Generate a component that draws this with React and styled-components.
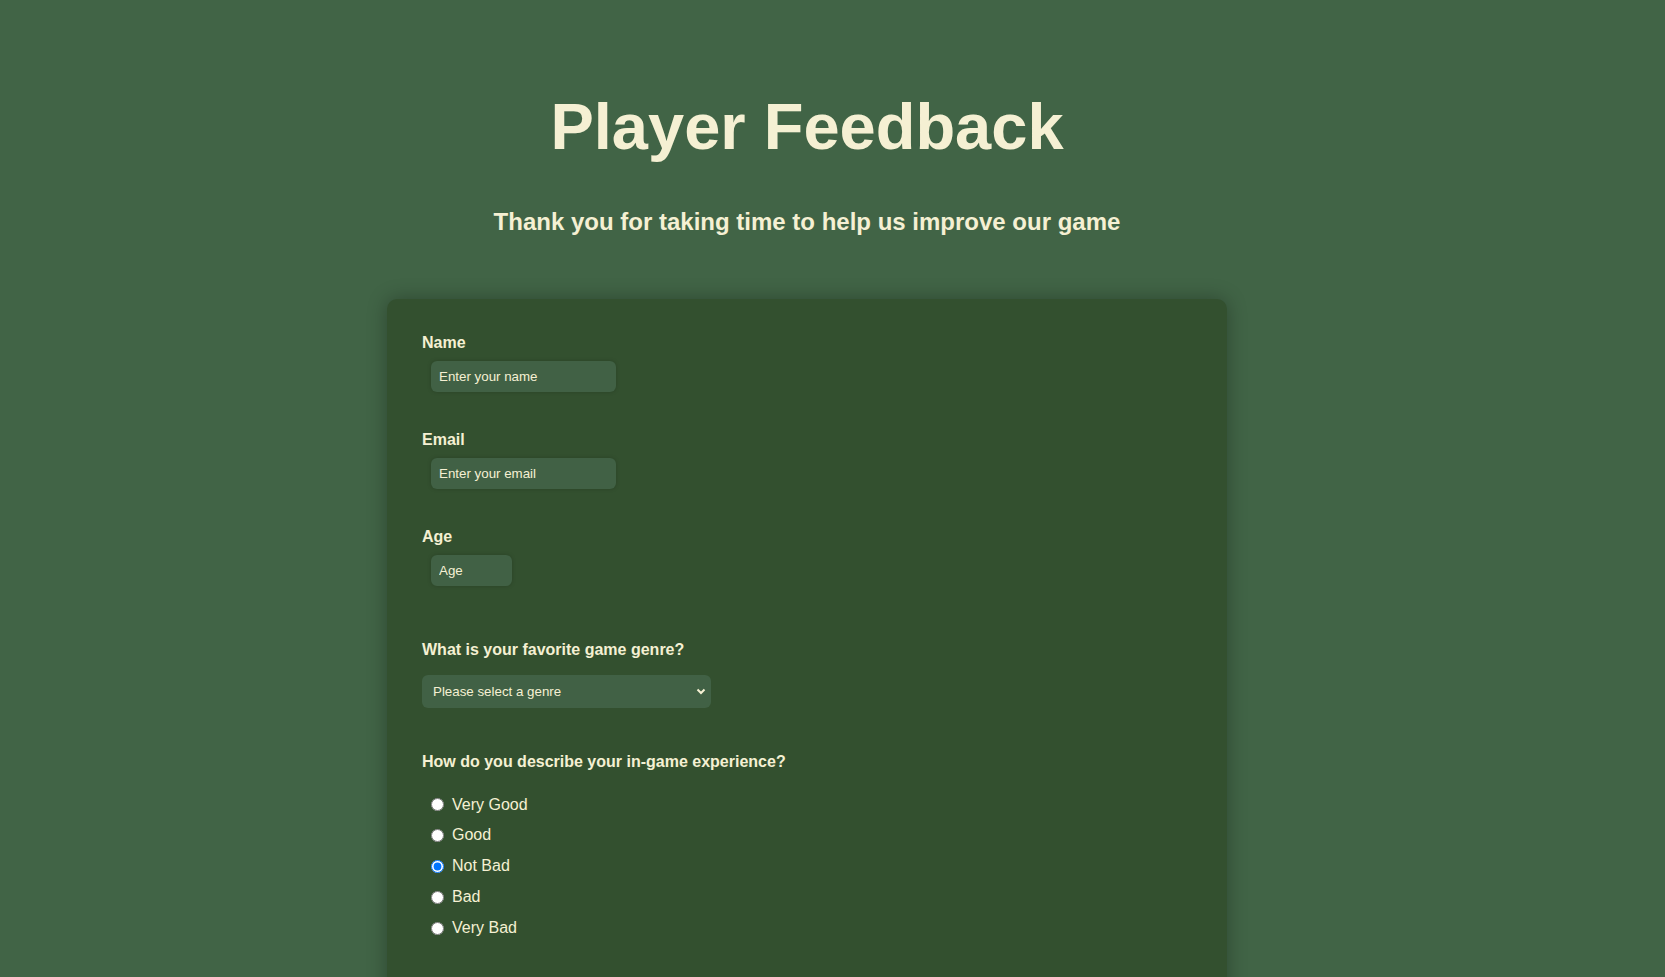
import React, { useState } from 'react';
import styled, { createGlobalStyle } from 'styled-components';

const cream = '#f5f0d3';

const GlobalStyle = createGlobalStyle`
  html, body {
    margin: 0;
    background-color: #416446;
    font-family: "Liberation Sans", Arial, sans-serif;
    color: ${cream};
  }
`;

const Page = styled.main`
  padding: 89px 51px 60px 0;
  display: flex;
  flex-direction: column;
  align-items: center;
`;

const Title = styled.h1`
  margin: 0;
  font-size: 65px;
  font-weight: bold;
  line-height: normal;
`;

const Subtitle = styled.p`
  margin: 44px 0 0;
  font-size: 24px;
  font-weight: bold;
  line-height: normal;
`;

const Card = styled.form`
  margin-top: 63px;
  width: 840px;
  box-sizing: border-box;
  padding: 35px 35px 40px;
  background-color: #33502f;
  border-radius: 10px;
  box-shadow: 0 0 20px rgba(0, 0, 0, 0.3);
`;

const Field = styled.div`
  display: flex;
  flex-direction: column;
  align-items: flex-start;
  margin-bottom: ${({ spacing }) => spacing || 39}px;
`;

const Label = styled.label`
  font-size: 16px;
  font-weight: bold;
  line-height: normal;
  margin-bottom: ${({ gap }) => gap || 9}px;
`;

const TextInput = styled.input`
  margin-left: 9px;
  width: ${({ narrow }) => (narrow ? 81 : 185)}px;
  height: 31px;
  box-sizing: border-box;
  padding: 0 8px;
  border: none;
  border-radius: 6px;
  background-color: #416145;
  box-shadow: 0 0 4px rgba(0, 0, 0, 0.18);
  color: ${cream};
  font-family: "Liberation Sans", Arial, sans-serif;
  font-size: 13.33px;
  outline: none;

  &::placeholder {
    color: ${cream};
    opacity: 1;
  }
`;

const SelectWrap = styled.div`
  position: relative;
  width: 289px;
`;

const Select = styled.select`
  appearance: none;
  width: 100%;
  height: 33px;
  padding: 0 28px 0 11px;
  border: none;
  border-radius: 6px;
  background-color: #416145;
  color: ${cream};
  font-family: "Liberation Sans", Arial, sans-serif;
  font-size: 13.33px;
  outline: none;
`;

const Chevron = styled.svg`
  position: absolute;
  right: 5px;
  top: 13px;
  pointer-events: none;
`;

const RadioList = styled.div`
  display: flex;
  flex-direction: column;
  gap: 12.9px;
  padding-left: 9px;
`;

const RadioRow = styled.label`
  display: flex;
  align-items: center;
  gap: 8px;
  font-size: 16px;
  line-height: normal;
`;

const Radio = styled.input`
  margin: 0;
  width: 13px;
  height: 13px;
`;

const TextArea = styled.textarea`
  margin-left: 9px;
  width: 400px;
  height: 100px;
  padding: 8px;
  border: none;
  border-radius: 6px;
  background-color: #416145;
  color: ${cream};
  font-family: "Liberation Sans", Arial, sans-serif;
  font-size: 13.33px;

  &::placeholder {
    color: ${cream};
    opacity: 1;
  }
`;

const Submit = styled.button`
  padding: 10px 24px;
  border: none;
  border-radius: 6px;
  background-color: ${cream};
  color: #33502f;
  font-family: "Liberation Sans", Arial, sans-serif;
  font-size: 16px;
  font-weight: bold;
`;

const experiences = ['Very Good', 'Good', 'Not Bad', 'Bad', 'Very Bad'];

const App = () => {
  const [experience, setExperience] = useState('Not Bad');

  return (
    <>
      <GlobalStyle />
      <Page>
        <Title>Player Feedback</Title>
        <Subtitle>Thank you for taking time to help us improve our game</Subtitle>
        <Card onSubmit={(e) => e.preventDefault()}>
          <Field>
            <Label htmlFor="name">Name</Label>
            <TextInput id="name" type="text" placeholder="Enter your name" />
          </Field>
          <Field>
            <Label htmlFor="email">Email</Label>
            <TextInput id="email" type="email" placeholder="Enter your email" />
          </Field>
          <Field spacing={55}>
            <Label htmlFor="age">Age</Label>
            <TextInput id="age" type="number" narrow placeholder="Age" />
          </Field>
          <Field spacing={45}>
            <Label htmlFor="genre" gap={16}>
              What is your favorite game genre?
            </Label>
            <SelectWrap>
              <Select id="genre" defaultValue="">
                <option value="" disabled>
                  Please select a genre
                </option>
                <option>Action</option>
                <option>Adventure</option>
                <option>RPG</option>
                <option>Strategy</option>
                <option>Sports</option>
              </Select>
              <Chevron width="10" height="7" viewBox="0 0 10 7">
                <polyline points="1.5,1.5 5,5 8.5,1.5" fill="none" stroke={cream} strokeWidth="2" />
              </Chevron>
            </SelectWrap>
          </Field>
          <Field spacing={64}>
            <Label gap={24.5}>How do you describe your in-game experience?</Label>
            <RadioList>
              {experiences.map((item) => (
                <RadioRow key={item}>
                  <Radio
                    type="radio"
                    name="experience"
                    checked={experience === item}
                    onChange={() => setExperience(item)}
                  />
                  {item}
                </RadioRow>
              ))}
            </RadioList>
          </Field>
          <Field>
            <Label htmlFor="comments">Any other comments?</Label>
            <TextArea id="comments" placeholder="Write your comments here" />
          </Field>
          <Submit type="submit">Submit</Submit>
        </Card>
      </Page>
    </>
  );
};

export default App;
